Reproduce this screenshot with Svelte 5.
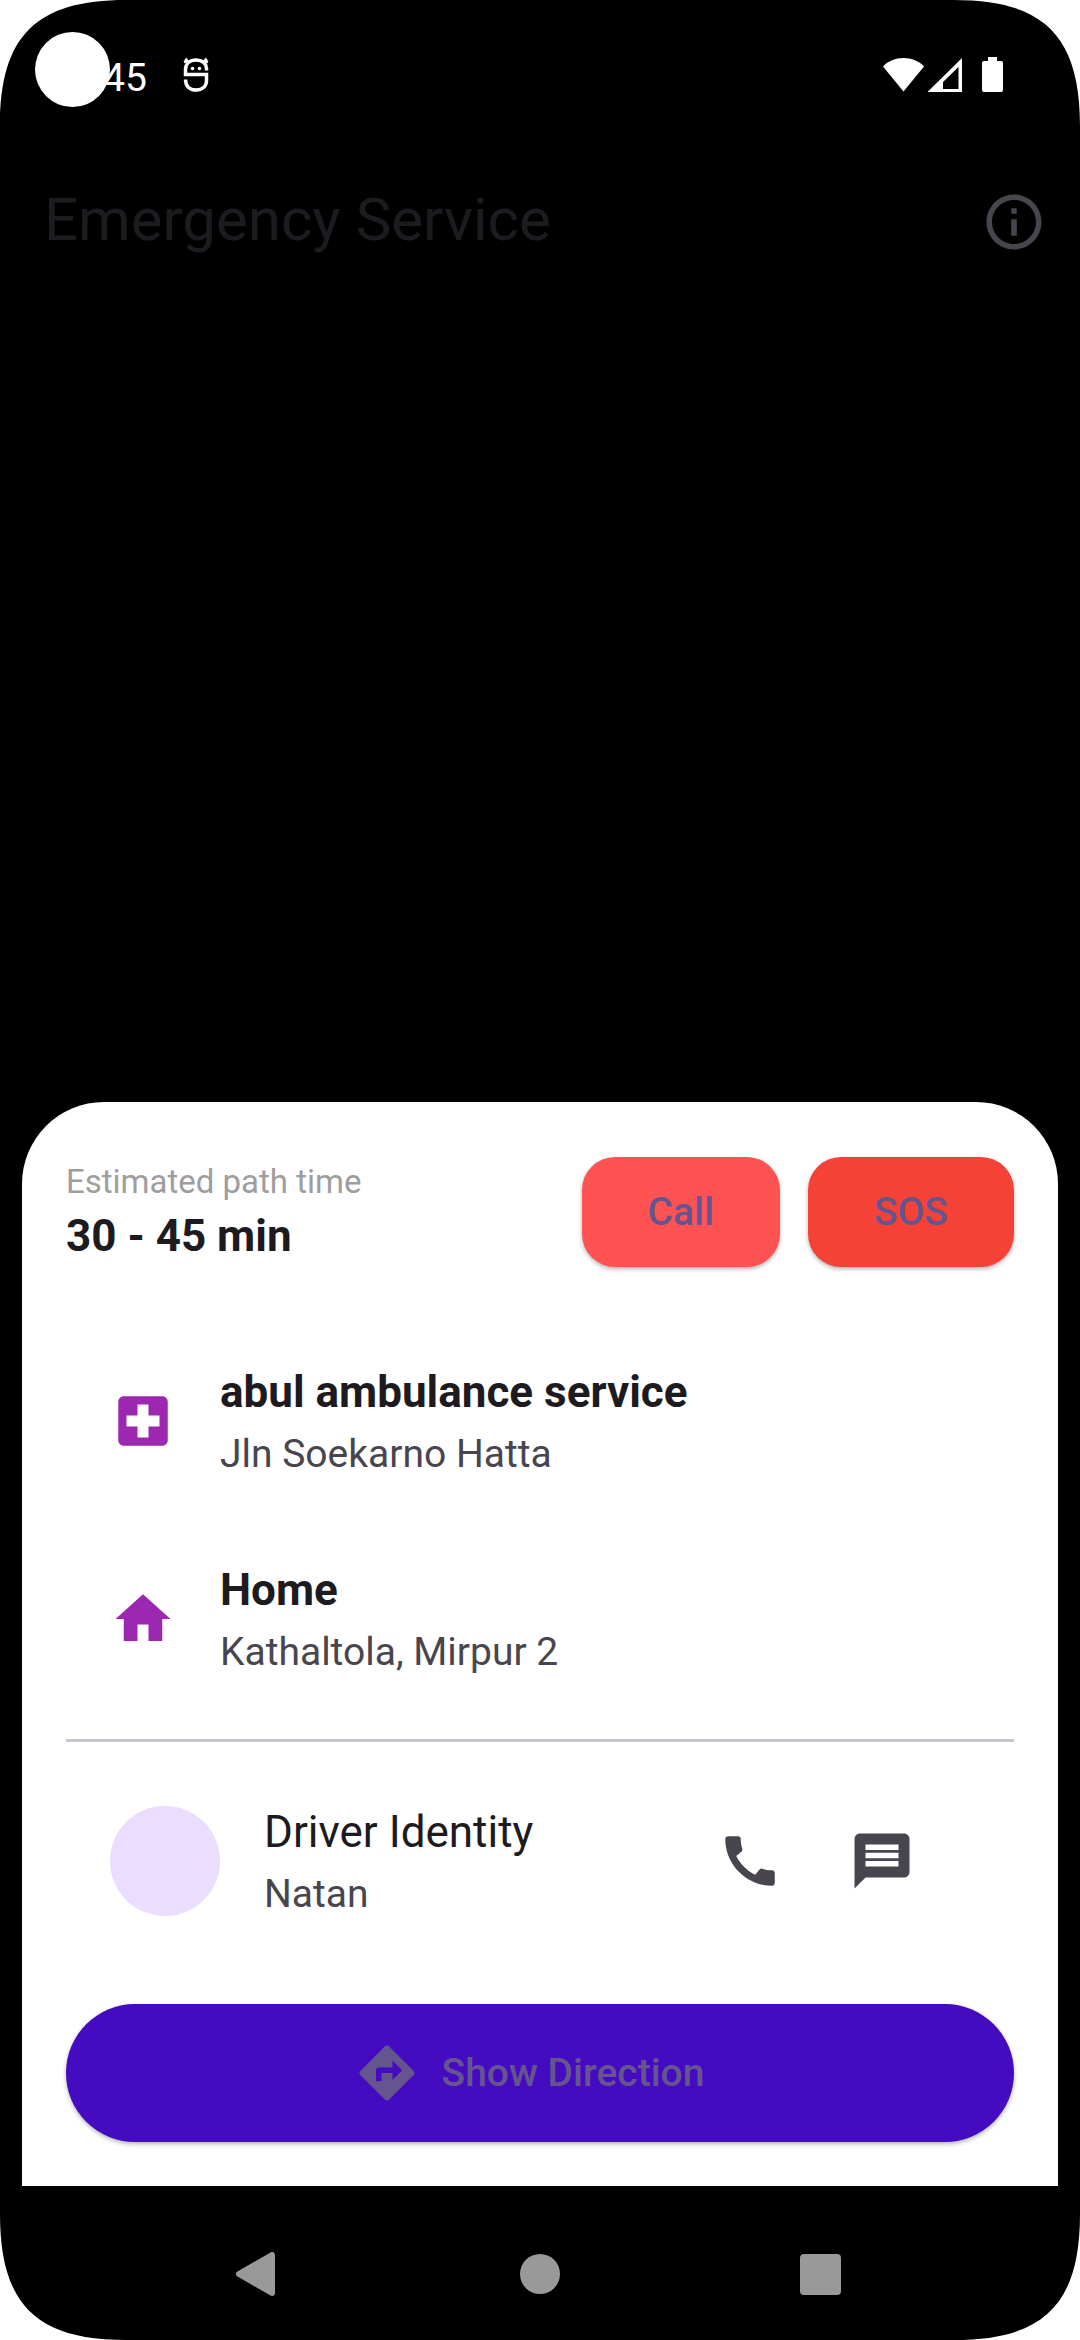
<script>
  const places = [
    {
      title: 'abul ambulance service',
      detail: 'Jln Soekarno Hatta',
      icon: 'M19 3H5c-1.1 0-1.99.9-1.99 2L3 19c0 1.1.9 2 2 2h14c1.1 0 2-.9 2-2V5c0-1.1-.9-2-2-2zm-1 11h-4v4h-4v-4H6v-4h4V6h4v4h4v4z'
    },
    {
      title: 'Home',
      detail: 'Kathaltola, Mirpur 2',
      icon: 'M10 20v-6h4v6h5v-8h3L12 3 2 12h3v8z'
    }
  ];
  const corners = ['top-left', 'top-right', 'bottom-left', 'bottom-right'];
</script>

<div class="screen">
  <div class="status">
    <div class="status-left">
      <span class="clock">45</span>
      <svg class="debug" viewBox="0 0 26 36" aria-hidden="true">
        <g fill="none" stroke="#fff" stroke-width="3.500">
          <path d="M23.500 13.500V11.500C23 6 19 3 13 3S2.500 6.500 2.500 12.500V17.500H23.500V23.500c0 6-4.500 9.500-10.500 9.500S2.500 29.500 2.500 22.500" />
          <path d="M2.500 1.500 6 6M23.500 1.500 20 6M1 5 5 3.500M25 5 21 3.500" stroke-width="2.500" />
        </g>
        <circle cx="9.500" cy="11.500" r="1.800" fill="#fff" />
        <circle cx="16.500" cy="11.500" r="1.800" fill="#fff" />
      </svg>
      <span class="camera"></span>
    </div>
    <svg class="signals" viewBox="0 0 122 38" aria-hidden="true">
      <path fill="#fff" d="M0 10.500C5 5 12.500 2 20.500 2S36 5 41 10.500L20.500 35.500z" />
      <path fill="#fff" fill-rule="evenodd" d="M79 2V36H44.500zM75.500 11 60 26V33H75.500z" />
      <path fill="#fff" d="M105 1h9v4h4a2 2 0 0 1 2 2v27a2 2 0 0 1-2 2h-17a2 2 0 0 1-2-2V7a2 2 0 0 1 2-2h4z" />
    </svg>
  </div>

  <header>
    <h1>Emergency Service</h1>
    <button class="icon-button info" aria-label="Information">
      <svg class="icon" viewBox="0 0 24 24">
        <path d="M11 7h2v2h-2zm0 4h2v6h-2zm1-9C6.480 2 2 6.480 2 12s4.480 10 10 10 10-4.480 10-10S17.520 2 12 2zm0 18c-4.410 0-8-3.590-8-8s3.590-8 8-8 8 3.590 8 8-3.590 8-8 8z" />
      </svg>
    </button>
  </header>

  <main>
    <section class="sheet">
      <div class="summary">
        <div class="estimate">
          <p class="label">Estimated path time</p>
          <p class="time">30 - 45 min</p>
        </div>
        <div class="actions">
          <button class="action call">Call</button>
          <button class="action sos">SOS</button>
        </div>
      </div>

      {#each places as place}
        <div class="tile">
          <svg class="icon place-icon" viewBox="0 0 24 24" aria-hidden="true"><path d={place.icon} /></svg>
          <div class="texts">
            <p class="title strong">{place.title}</p>
            <p class="detail">{place.detail}</p>
          </div>
        </div>
      {/each}

      <hr />

      <div class="tile driver">
        <span class="avatar"></span>
        <div class="texts">
          <p class="title">Driver Identity</p>
          <p class="detail">Natan</p>
        </div>
        <div class="contacts">
          <button class="icon-button" aria-label="Phone the driver">
            <svg class="icon" viewBox="0 0 24 24">
              <path d="M20.010 15.380c-1.230 0-2.420-.2-3.530-.560-.350-.120-.740-.030-1.010.240l-1.570 1.970c-2.830-1.350-5.480-3.900-6.890-6.830l1.950-1.660c.270-.280.350-.670.240-1.020-.370-1.110-.560-2.300-.560-3.530 0-.540-.450-.990-.990-.990H4.190C3.650 3 3 3.240 3 3.990 3 13.280 10.730 21 20.010 21c.710 0 .990-.630.990-1.180v-3.450c0-.540-.450-.990-.990-.990z" />
            </svg>
          </button>
          <button class="icon-button" aria-label="Message the driver">
            <svg class="icon" viewBox="0 0 24 24">
              <path d="M20 2H4c-1.100 0-1.990.9-1.990 2L2 22l4-4h14c1.100 0 2-.9 2-2V4c0-1.100-.9-2-2-2zm-2 12H6v-2h12v2zm0-3H6V9h12v2zm0-3H6V6h12v2z" />
            </svg>
          </button>
        </div>
      </div>

      <button class="direction">
        <svg class="icon" viewBox="0 0 24 24" aria-hidden="true">
          <path d="M21.710 11.290l-9-9c-.390-.390-1.020-.390-1.410 0l-9 9c-.390.390-.390 1.020 0 1.410l9 9c.390.390 1.020.390 1.410 0l9-9c.390-.380.390-1.010 0-1.410zM14 14.500V12h-4v3H8v-4c0-.550.450-1 1-1h5V7.500l3.500 3.500-3.500 3.500z" />
        </svg>
        Show Direction
      </button>
    </section>
  </main>

  <nav>
    <button aria-label="Back">
      <svg viewBox="0 0 48 48"><path d="M3 24 36 5V43z" stroke-linejoin="round" /></svg>
    </button>
    <button aria-label="Home screen">
      <svg viewBox="0 0 48 48"><circle cx="24" cy="24" r="20" /></svg>
    </button>
    <button aria-label="Recent apps">
      <svg viewBox="0 0 48 48"><rect x="4" y="4" width="41" height="41" rx="4" /></svg>
    </button>
  </nav>

  {#each corners as corner}
    <svg class="corner {corner}" viewBox="0 0 126 126" aria-hidden="true">
      <path d="M0 0H126C36 0 0 36 0 126z" />
    </svg>
  {/each}
</div>

<style>
  :global(body) {
    margin: 0;
    background: #fff;
  }

  .screen {
    position: relative;
    display: flex;
    flex-direction: column;
    min-height: 100vh;
    background: #000;
    color: #1d1b20;
    font-family: Roboto, sans-serif;
  }

  h1,
  p {
    margin: 0;
    font-weight: 400;
  }

  button {
    display: flex;
    align-items: center;
    justify-content: center;
    margin: 0;
    padding: 0;
    border: 0;
    background: none;
    color: inherit;
    font: inherit;
    cursor: pointer;
  }

  .icon {
    flex: none;
    width: 66px;
    height: 66px;
    fill: currentColor;
  }

  .status {
    position: relative;
    display: flex;
    align-items: center;
    justify-content: space-between;
    height: 145px;
    padding: 0 75px 0 103px;
    box-sizing: border-box;
  }

  .status-left {
    display: flex;
    align-items: center;
    gap: 36px;
    color: #fff;
  }

  .clock {
    font-size: 39px;
    line-height: 56px;
    padding-top: 10px;
  }

  .debug {
    width: 26px;
    height: 36px;
    padding-top: 5px;
  }

  .camera {
    position: absolute;
    top: 32px;
    left: 35px;
    width: 75px;
    height: 75px;
    border-radius: 50%;
    background: #fff;
  }

  .signals {
    width: 122px;
    height: 38px;
    padding-top: 5px;
  }

  header {
    display: flex;
    align-items: center;
    justify-content: space-between;
    height: 154px;
    padding-left: 44px;
  }

  h1 {
    padding-bottom: 4px;
    font-size: 60px;
    line-height: 76px;
  }

  .icon-button {
    width: 132px;
    height: 132px;
    color: #49454f;
  }

  main {
    display: flex;
    flex: 1;
    flex-direction: column;
    justify-content: flex-end;
    padding: 0 22px;
  }

  .sheet {
    padding: 55px 44px 44px;
    border-radius: 82px 82px 0 0;
    background: #fff;
  }

  .summary {
    display: flex;
    justify-content: space-between;
    margin-bottom: 55px;
  }

  .label {
    color: #9e9e9e;
    font-size: 33px;
    line-height: 50px;
  }

  .time {
    font-size: 44px;
    font-weight: 700;
    line-height: 58px;
  }

  .actions {
    display: flex;
    gap: 28px;
  }

  .action,
  .direction {
    box-shadow: 0 2px 4px rgba(0, 0, 0, 0.3);
    color: #65558f;
    font-size: 39px;
    font-weight: 500;
  }

  .action {
    height: 110px;
    padding: 0 66px;
    border-radius: 33px;
  }

  .call {
    background: #ff5252;
  }

  .sos {
    background: #f44336;
  }

  .tile {
    display: flex;
    align-items: center;
    gap: 44px;
    min-height: 198px;
    padding: 0 44px;
  }

  .place-icon {
    color: #9c27b0;
  }

  .title {
    font-size: 44px;
    line-height: 66px;
  }

  .strong {
    font-weight: 700;
  }

  .detail {
    color: #49454f;
    font-size: 39px;
    line-height: 58px;
  }

  hr {
    height: 3px;
    margin: 21px 0 20px;
    border: 0;
    background: #cac4d0;
  }

  .driver {
    padding-right: 66px;
  }

  .avatar {
    flex: none;
    width: 110px;
    height: 110px;
    border-radius: 50%;
    background: #eaddff;
  }

  .contacts {
    display: flex;
    margin-left: auto;
  }

  .direction {
    gap: 22px;
    width: 100%;
    height: 138px;
    margin-top: 44px;
    padding: 0 66px 0 44px;
    border-radius: 69px;
    background: #450bc0;
  }

  nav {
    display: flex;
    justify-content: center;
    gap: 232px;
    margin-top: 22px;
    height: 132px;
  }

  nav button {
    width: 48px;
  }

  nav svg {
    width: 48px;
    height: 48px;
    fill: #999;
  }

  nav path {
    stroke: #999;
    stroke-width: 6px;
  }

  .corner {
    position: absolute;
    width: 126px;
    height: 126px;
    fill: #fff;
    pointer-events: none;
  }

  .top-left {
    top: 0;
    left: 0;
  }

  .top-right {
    top: 0;
    right: 0;
    transform: rotate(90deg);
  }

  .bottom-left {
    bottom: 0;
    left: 0;
    transform: rotate(-90deg);
  }

  .bottom-right {
    right: 0;
    bottom: 0;
    transform: rotate(180deg);
  }
</style>
